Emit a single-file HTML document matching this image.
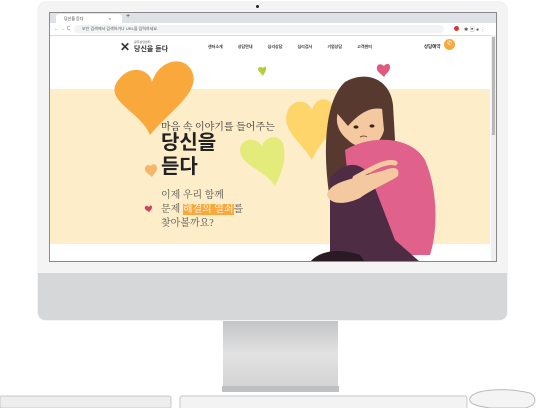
<!DOCTYPE html>
<html><head><meta charset="utf-8"><style>
body{margin:0;width:536px;height:408px;background:#fff;overflow:hidden;position:relative;font-family:"Liberation Sans","Noto Sans CJK KR",sans-serif}
.a{position:absolute}
</style></head><body>
<div class="a" style="left:38px;top:2px;width:469px;height:318px;border-radius:8px;background:#f4f4f4;box-shadow:0 0 1px #bbb"></div>
<div class="a" style="left:38px;top:273px;width:469px;height:47px;border-radius:0 0 7px 7px;background:#d6d7d8"></div>
<div class="a" style="left:256px;top:5px;width:3px;height:3px;border-radius:50%;background:#222"></div>
<div class="a" style="left:49px;top:12px;width:448px;height:250px;background:#fff;border:1px solid #8a8a8a;box-sizing:border-box;overflow:hidden">
  <div class="a" style="left:0;top:0;width:448px;height:10px;background:#dee1e6"></div>
  <div class="a" style="left:6px;top:1px;width:66px;height:9px;background:#fff;border-radius:3px 3px 0 0;font-size:4px;line-height:9px;padding-left:8px;box-sizing:border-box;color:#333">당신을 듣다 <span style="margin-left:24px">×</span></div>
  <div class="a" style="left:76px;top:0;font-size:7px;color:#444">+</div>
  <div class="a" style="left:0;top:10px;width:448px;height:12px;background:#fff;border-bottom:1px solid #ddd"></div>
  <div class="a" style="left:4px;top:13px;font-size:5px;color:#777">← → C</div>
  <div class="a" style="left:24px;top:12px;width:370px;height:8px;background:#f1f3f4;border-radius:4px;font-size:4px;line-height:8px;padding-left:8px;box-sizing:border-box;color:#555">보안 검색에서 검색하거나 URL을 입력하세요.</div>
  <div class="a" style="left:404px;top:13px;width:5px;height:5px;border-radius:50%;background:#d33"></div>
  <div class="a" style="left:414px;top:13px;font-size:5px;color:#555">✱ ▣ ● ⋮</div>
  <div class="a" style="left:70px;top:27px;font-size:12px;font-weight:bold;color:#333">✕</div>
  <div class="a" style="left:84px;top:27px;font-size:3px;color:#555">광주상담센터</div>
  <div class="a" style="left:84px;top:31px;font-size:7px;font-weight:bold;color:#333">당신을 듣다</div>
  <div class="a" style="left:158px;top:31px;font-size:4px;color:#333;word-spacing:14px;font-weight:bold">센터소개 상담안내 심리상담 심리검사 기업상담 고객센터</div>
  <div class="a" style="left:374px;top:31px;font-size:4.5px;font-weight:bold;color:#333">상담예약</div>
  <div class="a" style="left:394px;top:26px;width:11px;height:11px;border-radius:50%;background:#f9a83c;color:#fff;font-size:6px;text-align:center;line-height:11px">✆</div>
  <div class="a" style="left:0;top:76px;width:440px;height:155px;background:#fdedc9"></div>
  <div class="a" style="left:441px;top:22px;width:5px;height:226px;background:#f0f0f0"></div>
  <div class="a" style="left:442px;top:24px;width:3px;height:98px;background:#b8b8b8"></div>
</div>
<svg class="a" style="left:0;top:0" width="536" height="408" viewBox="0 0 536 408">
  <defs><clipPath id="s"><rect x="50" y="34" width="440" height="227"/></clipPath></defs>
  <g clip-path="url(#s)">
    <path d="M150 135 C140 110 100 100 120 78 C132 64 150 70 152 82 C158 62 180 55 190 68 C205 90 170 110 150 135Z" fill="#f9a83c"/>
    <path d="M312 160 C300 140 280 130 288 110 C294 98 308 100 312 110 C316 96 330 96 334 108 C340 130 320 140 312 160Z" fill="#fdd56a"/>
    <path d="M275 186 C265 170 240 165 240 150 C241 138 255 136 262 146 C266 134 283 134 284 148 C286 165 280 175 275 186Z" fill="#e3eb7a"/>
    <path d="M263 76 C260 72 258 71 258 69 C259 66 262 67 263 68 C264 66 267 66 266 69 C266 72 264 73 263 76Z" fill="#b8cc40"/>
    <path d="M384 77 C380 73 376 71 377 67 C378 63 382 64 384 66 C386 63 390 63 390 67 C390 72 386 73 384 77Z" fill="#e05a80"/>
    <path d="M152 177 C148 173 144 172 145 168 C146 164 150 165 151 166 C152 163 157 164 157 168 C157 172 154 173 152 177Z" fill="#f5b56a"/>
    <path d="M149 212 C146 210 144 209 145 207 C146 205 148 206 149 207 C150 205 152 205 152 207 C152 209 151 210 149 212Z" fill="#d04060"/>
    <path d="M330 200 C322 150 325 100 345 82 C365 70 390 78 393 105 L395 140 C380 170 350 190 330 200Z" fill="#57392f"/>
    <path d="M338 112 C345 100 375 98 382 108 L384 130 C380 148 360 152 348 140 C338 132 335 122 338 112Z" fill="#f5c9a0"/>
    <path d="M336 112 C345 88 378 86 390 112 C376 104 362 110 348 126 Z" fill="#57392f"/>
    <ellipse cx="356" cy="127" rx="2.5" ry="1.6" fill="#3a2520"/>
    <ellipse cx="372" cy="126" rx="2.5" ry="1.6" fill="#3a2520"/>
    <path d="M360 137 Q364 135 367 137" stroke="#8a4a40" stroke-width="1" fill="none"/>
    <path d="M345 150 C370 135 410 135 425 160 C438 190 438 230 430 255 L380 255 L350 200Z" fill="#e0628c"/>
    <path d="M330 178 C345 160 360 162 370 175 L395 240 L420 262 L330 262Z" fill="#4e2c44"/>
    <path d="M327 195 C330 180 360 178 385 170 C395 166 400 168 398 176 C390 182 370 190 360 198 C345 205 330 205 327 195Z" fill="#f5c9a0"/>
    <path d="M355 178 C370 170 385 160 395 163" stroke="#f5c9a0" stroke-width="5" fill="none" stroke-linecap="round"/>
    <path d="M310 262 C320 250 340 248 360 255 L365 262Z" fill="#2a1a24"/>
  </g>
  <defs><linearGradient id="st" x1="0" y1="0" x2="0" y2="1"><stop offset="0" stop-color="#c4c5c6"/><stop offset="0.5" stop-color="#e2e2e3"/><stop offset="1" stop-color="#d4d4d5"/></linearGradient></defs>
  <rect x="223" y="321" width="115" height="66" fill="url(#st)"/>
  <rect x="222" y="386" width="117" height="6" fill="#bfc0c1"/>
  <rect x="0" y="396" width="171" height="12" rx="2" fill="#eeeeef" stroke="#c8c8c8"/>
  <rect x="180" y="396" width="287" height="14" rx="2" fill="#f3f3f3" stroke="#c8c8c8"/>
  <path d="M470 398 C475 388 510 388 530 393 C538 398 536 406 525 408 L490 408 C475 406 468 403 470 398Z" fill="#f4f4f4" stroke="#bbb"/>
</svg>
<div class="a" style="left:161px;top:118px;font-size:10px;color:#333;font-family:'Liberation Serif','Noto Serif CJK SC',serif">마음 속 이야기를 들어주는</div>
<div class="a" style="left:161px;top:131px;font-size:20px;font-weight:bold;color:#222;line-height:24px">당신을<br>듣다</div>
<div class="a" style="left:161px;top:189px;font-size:10px;color:#555;line-height:14px;font-family:'Liberation Serif','Noto Serif CJK SC',serif">이제 우리 함께<br>문제 <span style="background:#f9a83c;color:#fff">해결의 열쇠</span>를<br>찾아볼까요?</div>
</body></html>
